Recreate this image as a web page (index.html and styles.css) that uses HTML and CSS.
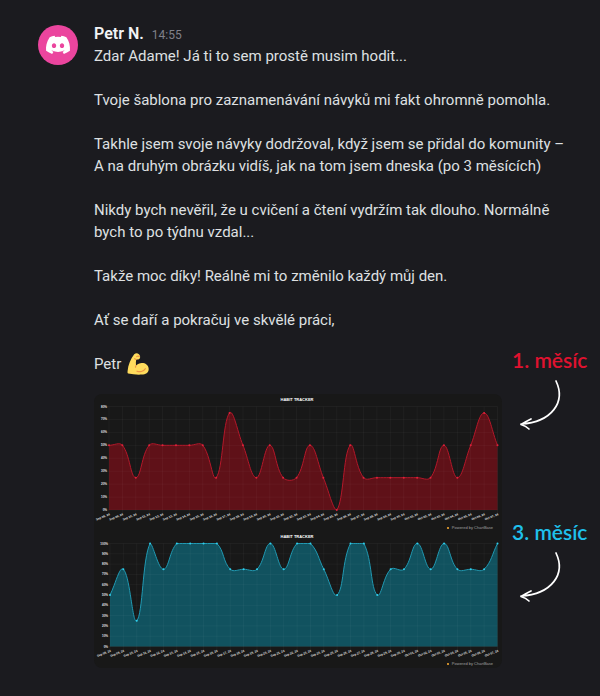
FILE: index.html
```html
<!DOCTYPE html>
<html lang="cs">
<head>
<meta charset="utf-8">
<meta name="viewport" content="width=device-width, initial-scale=1">
<title>Petr N.</title>
<link rel="stylesheet" href="styles.css">
</head>
<body>
<article class="message">
  <svg class="avatar" viewBox="0 0 40 40" role="img" aria-label="Avatar">
    <circle cx="20" cy="20" r="20" fill="#eb459e"/>
    <path transform="translate(8 10.7) scale(.189)" fill="#fff" d="M107.7 8.07A105.15 105.15 0 0 0 81.47 0a72.06 72.06 0 0 0-3.36 6.83 97.68 97.68 0 0 0-29.11 0A72.37 72.37 0 0 0 45.64 0a105.89 105.89 0 0 0-26.25 8.09C2.79 32.65-1.71 56.6.54 80.21a105.73 105.73 0 0 0 32.17 16.15 77.7 77.7 0 0 0 6.89-11.11 68.42 68.42 0 0 1-10.85-5.18c.91-.66 1.8-1.34 2.66-2a75.57 75.57 0 0 0 64.32 0c.87.71 1.76 1.39 2.66 2a68.68 68.68 0 0 1-10.87 5.19 77 77 0 0 0 6.89 11.1 105.25 105.25 0 0 0 32.19-16.14c2.64-27.38-4.51-51.11-18.9-72.15ZM42.45 65.69C36.18 65.69 31 60 31 53s5-12.74 11.43-12.74S54 46 53.89 53s-5.05 12.69-11.44 12.69Zm42.24 0C78.41 65.69 73.25 60 73.25 53s5-12.74 11.44-12.74S96.23 46 96.12 53s-5.04 12.69-11.43 12.69Z"/>
  </svg>
  <div class="body">
    <header class="meta"><strong class="author">Petr N.</strong><time class="time">14:55</time></header>
    <div class="text">
      <p>Zdar Adame! Já ti to sem prostě musim hodit...</p>
      <p>Tvoje šablona pro zaznamenávání návyků mi fakt ohromně pomohla.</p>
      <p>Takhle jsem svoje návyky dodržoval, když jsem se přidal do komunity –<br>A na druhým obrázku vidíš, jak na tom jsem dneska (po 3 měsících)</p>
      <p>Nikdy bych nevěřil, že u cvičení a čtení vydržím tak dlouho. Normálně<br>bych to po týdnu vzdal...</p>
      <p>Takže moc díky! Reálně mi to změnilo každý můj den.</p>
      <p>Ať se daří a pokračuj ve skvělé práci,</p>
    </div>
    <div class="closing">
      <div class="results">
        <p class="signature">Petr
          <svg class="emoji" viewBox="0 0 22 22" role="img" aria-label="Biceps">
            <path fill="#ffdc5d" d="M7.2 1.2C8.6.2 10.4.1 11.6.9c1.3.9 1.7 2.3 1.5 3.6-.1 1.1-.9 1.800-2 1.900-.7.1-1.3.1-1.9.2-.3 2-.5 4-.2 6 2-2 4.500-3 7.200-2.500 3.400.6 5.600 3.100 5.500 6.100-.1 3.300-3 5.300-7 5.400-4.700.2-9.300-.1-13.500-1C.5 20.400.4 19.400.6 18 1.100 12 3.500 6 7.200 1.200Z"/>
            <path fill="none" stroke="#ef9645" stroke-width="1.2" stroke-linecap="round" d="M10 18.200c2.500 1 6.500.6 8.300-2.500M8.900 12.700c-.3.500-.4 1-.4 1.500M9.200 6.500c-.7-.1-1.200-.4-1.500-.9M9.700 3.600c.8-.7 2-.6 2.600.1"/>
          </svg>
        </p>
        <div class="charts">
          <svg class="chart" id="first" viewBox="0 0 408 137" role="img" aria-label="Habit tracker, 1. měsíc"></svg>
          <svg class="chart" id="third" viewBox="0 0 408 137" role="img" aria-label="Habit tracker, 3. měsíc"></svg>
        </div>
      </div>
      <aside class="notes">
        <div class="note note-first">
          <span>1. měsíc</span>
          <svg class="arrow" viewBox="0 0 50 52"><path d="M44 6C54 27 40 47 9 49M19 44Q13 47 9 49.500Q14 51 17 54"/></svg>
        </div>
        <div class="note note-third">
          <span>3. měsíc</span>
          <svg class="arrow" viewBox="0 0 50 52"><path d="M44 6C54 27 40 47 9 49M19 44Q13 47 9 49.500Q14 51 17 54"/></svg>
        </div>
      </aside>
    </div>
  </div>
</article>
<script src="charts.js"></script>
</body>
</html>
```
FILE: styles.css
```css
* { box-sizing: border-box; }
body {
  margin: 0;
  background: #1b1b1f;
  color: #dfe0e2;
  font: 15px/22px Roboto, "Noto Sans", sans-serif;
}
p { margin: 0; }
.message {
  display: grid;
  grid-template-columns: 40px minmax(0, 1fr);
  gap: 16px;
  padding: 23px 0 24px 38px;
}
.avatar { width: 40px; height: 40px; margin-top: 2px; }
.meta { display: flex; align-items: baseline; gap: 8px; height: 22px; }
.author { color: #f2f3f5; font-size: 16px; font-weight: 600; }
.time { color: #80818a; font-size: 12px; }
.text { display: grid; gap: 22px; }
.closing {
  display: grid;
  grid-template-columns: minmax(0, 1fr) 98px;
  margin-top: 22px;
}
.signature { display: flex; align-items: center; gap: 6px; }
.emoji { width: 22px; height: 22px; }
.charts {
  margin-top: 19px;
  border-radius: 8px;
  overflow: hidden;
  background: #181818;
}
.chart { display: block; width: 100%; font-family: "Liberation Sans", sans-serif; }
.chart .title { font-size: 4px; font-weight: 700; fill: #fff; text-anchor: middle; }
.chart .tick { font-size: 3px; font-weight: 700; fill: #e4e4e4; text-anchor: end; }
.chart .credit { font-size: 4px; fill: #a0a0a0; text-anchor: end; }
.chart .grid { stroke: #fff; stroke-opacity: .035; stroke-width: 1; fill: none; }
.line { fill: none; stroke-width: 1; }
#first .line { stroke: #b3182a; }
#first .area { fill: #5f1118; }
#first .dot { fill: #e0213a; }
#third .line { stroke: #2199b2; }
#third .area { fill: #11525f; }
#third .dot { fill: #2fd0ee; }
.notes {
  display: flex;
  flex-direction: column;
  gap: 94px;
  margin-top: -4px;
  padding-left: 10px;
  font: 600 21px/22px Lato, sans-serif;
}
.note { display: grid; gap: 4px; }
.note span { white-space: nowrap; }
.note-first { color: #e0122f; }
.note-third { color: #1fc0ec; }
.arrow {
  width: 50px;
  height: 52px;
  overflow: visible;
  fill: none;
  stroke: #fff;
  stroke-width: 1.7;
  stroke-linecap: round;
  stroke-linejoin: round;
}
```
FILE: charts.js
```js
const WIDTH = 408;
const labels = Array.from({ length: 30 }, (_, i) => {
  const day = i + 8;
  return (day <= 30 ? "Sep " : "Oct ") + String(day <= 30 ? day : day - 30).padStart(2, "0") + ", 24";
});

// Cardinal spline with control points clamped to the plot area.
function smooth(points, top, bottom) {
  const clamp = y => Math.max(top, Math.min(bottom, y));
  const controls = points.map((p, i) => {
    const a = points[i - 1] || p, b = points[i + 1] || p;
    const d1 = Math.hypot(p[0] - a[0], p[1] - a[1]);
    const d2 = Math.hypot(b[0] - p[0], b[1] - p[1]);
    const f1 = 0.4 * d1 / (d1 + d2), f2 = 0.4 * d2 / (d1 + d2);
    const dx = b[0] - a[0], dy = b[1] - a[1];
    return [[p[0] - f1 * dx, clamp(p[1] - f1 * dy)], [p[0] + f2 * dx, clamp(p[1] + f2 * dy)]];
  });
  return "M" + points[0] + points.slice(1).map((p, i) => "C" + [controls[i][1], controls[i + 1][0], p].join(" ")).join("");
}

function draw(id, values, max, left, top, bottom, titleY, creditY) {
  const right = 403.5;
  const x = i => left + (right - left) * i / 29;
  const y = v => bottom - (bottom - top) * v / max;
  const points = values.map((v, i) => [x(i), y(v)]);
  const line = smooth(points, top, bottom);
  let grid = "", ticks = "";
  for (let v = 0; v <= max; v += 10) {
    grid += `M${left - 3} ${y(v)}H${right}`;
    ticks += `<text class="tick" x="${left - 2}" y="${y(v) + 1}">${v}%</text>`;
  }
  labels.forEach((label, i) => {
    grid += `M${x(i)} ${top}V${bottom + 3}`;
    ticks += `<text class="tick" transform="translate(${x(i) + 1} ${bottom + 5}) rotate(-22)">${label}</text>`;
  });
  document.getElementById(id).innerHTML =
    `<path class="area" d="${line}L${right} ${bottom}L${left} ${bottom}Z"/>` +
    `<path class="grid" d="${grid}"/><path class="line" d="${line}"/>` +
    points.map(p => `<circle class="dot" cx="${p[0]}" cy="${p[1]}" r="1"/>`).join("") + ticks +
    `<text class="title" x="${WIDTH / 2 - 1}" y="${titleY}">HABIT TRACKER</text>` +
    `<circle cx="354" cy="${creditY - 1}" r="1.1" fill="#f0a531"/>` +
    `<text class="credit" x="399" y="${creditY}">Powered by ChartBase</text>`;
}

draw("first", [50, 50, 25, 50, 50, 50, 50, 50, 25, 75, 50, 25, 50, 25, 25, 50, 25, 0, 50, 25, 25, 25, 25, 25, 25, 50, 25, 50, 75, 50],
  80, 15, 12.5, 116, 7, 135);
draw("third", [50, 75, 25, 100, 75, 100, 100, 100, 100, 75, 75, 75, 100, 75, 100, 100, 75, 50, 100, 100, 50, 75, 75, 100, 75, 100, 75, 75, 75, 100],
  100, 16, 12.5, 115.5, 7, 134);
```
